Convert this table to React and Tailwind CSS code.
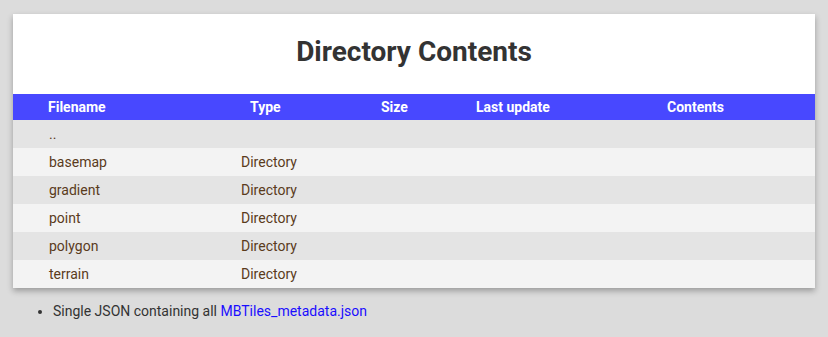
import React from "react";

const ROWS = [
  { name: "..", type: "" },
  { name: "basemap", type: "Directory" },
  { name: "gradient", type: "Directory" },
  { name: "point", type: "Directory" },
  { name: "polygon", type: "Directory" },
  { name: "terrain", type: "Directory" },
];

export default function App() {
  return (
    <div
      className="min-h-[337px] bg-[#dcdcdc] pt-[14px] px-[13px] text-[#333333]"
      style={{ fontFamily: "Roboto, 'Liberation Sans', sans-serif" }}
    >
      {/* Card */}
      <div className="bg-white shadow-[0_3px_6px_rgba(0,0,0,0.3)]">
        <div className="h-[80px] flex items-center justify-center pb-[5px]">
          <h1 className="text-[28px] font-bold text-[#333333] leading-none">Directory Contents</h1>
        </div>

        <table className="w-full table-fixed border-collapse text-[14px]">
          <colgroup>
            <col className="w-[228px]" />
            <col className="w-[140px]" />
            <col className="w-[95px]" />
            <col className="w-[191px]" />
            <col />
          </colgroup>
          <thead>
            <tr className="h-[26px] bg-[#4848ff] text-white font-bold text-left">
              <th className="pl-[35px] font-bold">Filename</th>
              <th className="pl-[9px] font-bold">Type</th>
              <th className="font-bold">Size</th>
              <th className="font-bold">Last update</th>
              <th className="font-bold">Contents</th>
            </tr>
          </thead>
          <tbody>
            {ROWS.map((r, i) => (
              <tr
                key={r.name}
                className={`h-[28px] text-[#5a3b1c] ${i % 2 === 0 ? "bg-[#e4e4e4]" : "bg-[#f3f3f3]"}`}
              >
                <td className="pl-[36px]">{r.name}</td>
                <td>{r.type}</td>
                <td></td>
                <td></td>
                <td></td>
              </tr>
            ))}
          </tbody>
        </table>
      </div>

      <ul className="list-disc pl-[40px] mt-[14px] text-[14px] leading-[18px]">
        <li>
          Single JSON containing all{" "}
          <a className="text-[#1a0dff]" href="#">MBTiles_metadata.json</a>
        </li>
      </ul>
    </div>
  );
}
